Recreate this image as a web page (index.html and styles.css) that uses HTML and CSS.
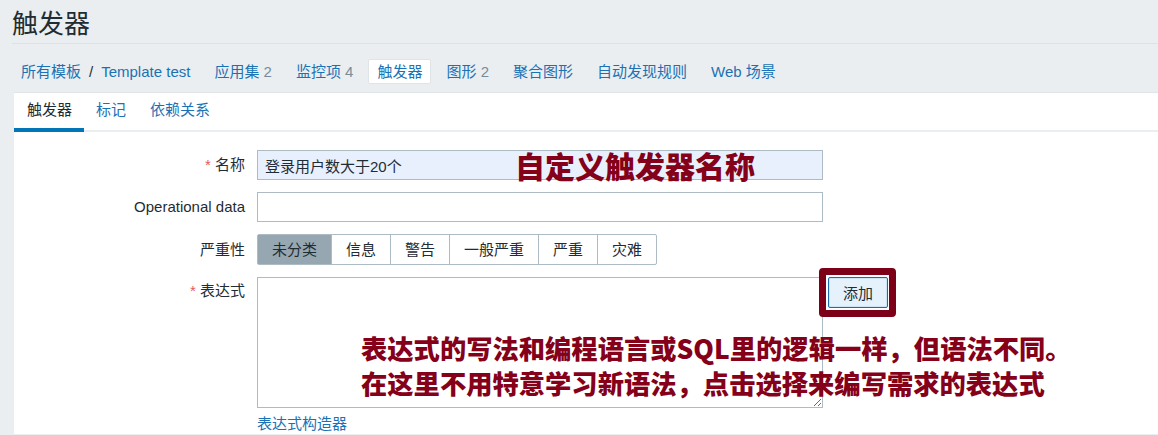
FILE: index.html
```html
<!DOCTYPE html>
<html lang="zh">
<head>
<meta charset="utf-8">
<title>触发器</title>
<link rel="stylesheet" href="styles.css">
</head>
<body>
<header class="page-header"><h1 class="title">触发器</h1></header>
<nav class="nav">
  <span class="nav-item crumb"><a class="link">所有模板</a><span class="sep">/</span><a class="link">Template test</a></span>
  <a class="nav-item">应用集 <span class="count">2</span></a>
  <a class="nav-item">监控项 <span class="count">4</span></a>
  <span class="nav-item active">触发器</span>
  <a class="nav-item">图形 <span class="count">2</span></a>
  <a class="nav-item">聚合图形</a>
  <a class="nav-item">自动发现规则</a>
  <a class="nav-item">Web 场景</a>
</nav>
<main class="panel">
  <div class="tabs">
    <span class="tab active">触发器</span>
    <a class="tab">标记</a>
    <a class="tab">依赖关系</a>
  </div>
  <form class="form">
    <div class="row">
      <label class="label"><span class="req">*</span> 名称</label>
      <div class="field name-field">
        <input class="input filled" type="text" value="登录用户数大于20个">
        <span class="note note-name">自定义触发器名称</span>
      </div>
    </div>
    <div class="row">
      <label class="label">Operational data</label>
      <div class="field"><input class="input" type="text"></div>
    </div>
    <div class="row">
      <label class="label">严重性</label>
      <div class="field">
        <div class="seg">
          <span class="seg-btn selected">未分类</span>
          <span class="seg-btn">信息</span>
          <span class="seg-btn">警告</span>
          <span class="seg-btn">一般严重</span>
          <span class="seg-btn">严重</span>
          <span class="seg-btn">灾难</span>
        </div>
      </div>
    </div>
    <div class="row row-top">
      <label class="label"><span class="req">*</span> 表达式</label>
      <div class="field">
        <div class="expr">
          <div class="ta-wrap">
            <textarea class="textarea"></textarea>
            <div class="note note-expr">表达式的写法和编程语言或SQL里的逻辑一样，但语法不同。<br>在这里不用特意学习新语法，点击选择来编写需求的表达式</div>
          </div>
          <div class="add-wrap">
            <button type="button" class="btn-add">添加</button>
            <span class="hl-box"></span>
          </div>
        </div>
        <a class="builder">表达式构造器</a>
      </div>
    </div>
  </form>
</main>
</body>
</html>
```
FILE: styles.css
```css
* { box-sizing: border-box; }
html, body { margin: 0; padding: 0; }
body {
  background: #ebeef1;
  font-family: "Liberation Sans", "Noto Sans CJK SC", sans-serif;
  font-size: 15px;
  color: #1f2c33;
  width: 1158px;
  height: 435px;
  overflow: hidden;
}
.page-header {
  margin-left: 12px;
  height: 44px;
  border-bottom: 1px solid #dde2e6;
}
.title {
  margin: 0;
  padding-top: 5px;
  font-family: "Noto Sans CJK SC", sans-serif;
  font-weight: 400;
  font-size: 26px;
  line-height: 34px;
  color: #1f2c33;
}
.nav {
  display: flex;
  align-items: center;
  gap: 6px;
  margin: 15px 0 0 12px;
  height: 25px;
}
.nav-item {
  padding: 0 8px;
  height: 25px;
  line-height: 23px;
  color: #1a72b4;
  white-space: nowrap;
  border: 1px solid transparent;
  border-radius: 2px;
}
.link { color: #1a72b4; }
.nav-item.active {
  background: #fff;
  border-color: #dfe4e7;
}
.count { color: #768d99; }
.sep { color: #1f2c33; margin: 0 8px 0 8px; }
.panel {
  margin: 8px 0 0 14px;
  background: #fff;
  border-top: 1px solid #dfe4e7;
  height: 342px;
  overflow: hidden;
  position: relative;
}
.tabs {
  display: flex;
  height: 39px;
  border-bottom: 2px solid #ebeef1;
}
.tab {
  padding: 0 12px;
  line-height: 33px;
  color: #1a72b4;
  white-space: nowrap;
  border-bottom: 4px solid transparent;
  margin-bottom: -2px;
}
.tab:first-child { padding-left: 13px; }
.tab.active {
  color: #1f2c33;
  border-bottom-color: #0275b8;
}
.form {
  padding-top: 18px;
  display: flex;
  flex-direction: column;
  gap: 12px;
}
.row {
  display: flex;
  align-items: center;
  gap: 12px;
}
.row-top { align-items: flex-start; }
.label {
  width: 231px;
  text-align: right;
  white-space: nowrap;
  line-height: 30px;
}
.row-top .label { line-height: 28px; }
.req { color: #e45959; }
.field { position: relative; }
.input {
  display: block;
  width: 566px;
  height: 30px;
  border: 1px solid #acbbc4;
  border-radius: 0;
  padding: 0 7px;
  font: inherit;
  color: #1f2c33;
  background: #fff;
  outline: none;
}
.input.filled { background: #e8f0fe; }
.note {
  position: absolute;
  color: #850019;
  font-family: "Noto Sans CJK SC", sans-serif;
  font-weight: 900;
  white-space: nowrap;
}
.note-name {
  left: 258px;
  top: -2px;
  font-size: 30px;
  line-height: 34px;
}
.seg {
  display: flex;
  border: 1px solid #acbbc4;
  border-radius: 2px;
  height: 31px;
}
.seg-btn {
  padding: 0 14px;
  line-height: 29px;
  border-right: 1px solid #acbbc4;
  white-space: nowrap;
}
.seg-btn:last-child { border-right: 0; }
.seg-btn.selected {
  background: #97a7b1;
  color: #1f2c33;
}
.expr {
  display: flex;
  align-items: flex-start;
  gap: 5px;
}
.ta-wrap { position: relative; }
.textarea {
  display: block;
  width: 566px;
  height: 131px;
  border: 1px solid #acbbc4;
  border-radius: 0;
  margin: 0;
  resize: both;
  font: inherit;
  background: #fff;
}
.note-expr {
  left: 104px;
  top: 53px;
  font-size: 26.3px;
  line-height: 35px;
}
.add-wrap { position: relative; }
.btn-add {
  display: block;
  width: 60px;
  height: 31px;
  border: 1px solid #1f6aa8;
  border-radius: 2px;
  background: #e5f1fb;
  box-shadow: inset 0 0 0 1px #cde4f7;
  font: inherit;
  color: #1f2c33;
  padding: 0;
}
.hl-box {
  position: absolute;
  left: -9px;
  top: -9px;
  right: -8px;
  bottom: -9px;
  border: 7px solid #7d0019;
  border-radius: 4px;
  pointer-events: none;
}
.builder {
  display: block;
  margin-top: 7px;
  color: #1a72b4;
  line-height: 18px;
}
```
